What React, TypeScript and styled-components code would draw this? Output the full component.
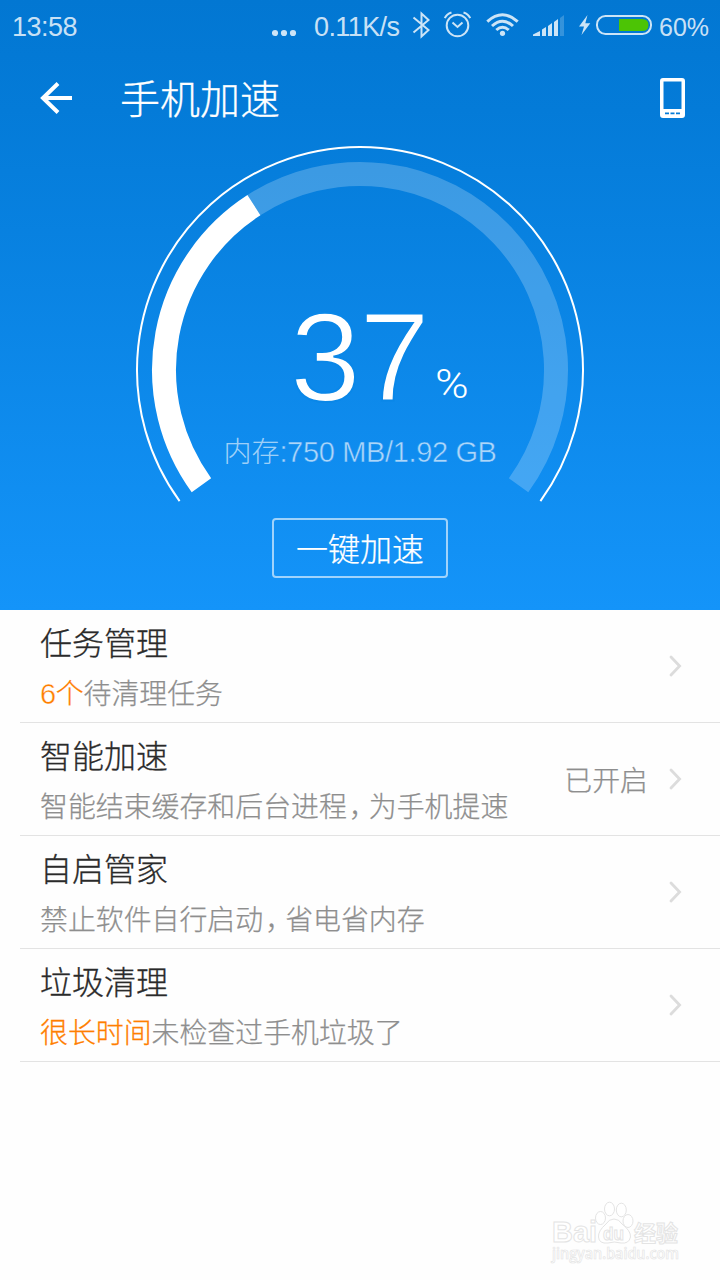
import React from 'react';
import styled, { createGlobalStyle } from 'styled-components';

const GlobalStyle = createGlobalStyle`
  * { box-sizing: border-box; }
  body {
    margin: 0;
    background: #fff;
    font-family: "Liberation Sans", "Noto Sans CJK SC", sans-serif;
  }
`;

const Screen = styled.div`
  width: 720px;
  height: 1280px;
  display: flex;
  flex-direction: column;
  background: #fefefe;
  overflow: hidden;
`;

const Hero = styled.section`
  height: 610px;
  display: flex;
  flex-direction: column;
  align-items: center;
  background: linear-gradient(180deg, #0277d2 0%, #047bd8 18%, #1494f9 100%);
  color: #fff;
`;

const StatusBar = styled.div`
  width: 100%;
  height: 50px;
  padding: 3px 12px 0;
  display: flex;
  align-items: center;
  color: rgba(255, 255, 255, 0.8);
  font-size: 27px;
  line-height: 50px;
  white-space: nowrap;
`;

const StatusText = styled.span<{ $width: number; $spacing?: number; $size?: number }>`
  flex: none;
  width: ${(p) => p.$width}px;
  letter-spacing: ${(p) => p.$spacing ?? 0}px;
  font-size: ${(p) => p.$size ?? 27}px;
`;

const StatusIcons = styled.svg`
  flex: none;
  display: block;
  margin-top: -3px;
`;

const Spacer = styled.div`
  flex: 1;
`;

const TitleBar = styled.header`
  width: 100%;
  height: 96px;
  padding: 0 34px 0 40px;
  display: flex;
  align-items: center;
`;

const Title = styled.h1`
  flex: 1;
  margin: -3px 0 0 47px;
  font-family: "Noto Sans CJK SC", sans-serif;
  font-weight: 300;
  font-size: 40px;
  line-height: 60px;
  -webkit-text-stroke: 0.3px currentColor;
`;

const Gauge = styled.div`
  display: grid;
  width: 450px;
  height: 372px;
  > * { grid-area: 1 / 1; }
`;

const Reading = styled.div`
  display: flex;
  flex-direction: column;
  align-items: center;
  padding-top: 140px;
`;

const Percent = styled.div`
  display: flex;
  align-items: baseline;
  height: 142px;
  line-height: 142px;
  margin-left: 37px;
`;

const Figure = styled.span`
  font-size: 127px;
  letter-spacing: -1.5px;
  -webkit-text-stroke: 2px #0a87e8;
`;

const Unit = styled.span`
  margin-left: 9px;
  font-family: Roboto, sans-serif;
  font-weight: 300;
  font-size: 40px;
  line-height: 40px;
  transform: translateY(-3px) scaleX(1.14);
`;

const Memory = styled.div`
  margin-top: 1px;
  font-family: "Noto Sans CJK SC", sans-serif;
  font-weight: 300;
  font-size: 28px;
  line-height: 42px;
  white-space: nowrap;
  color: rgba(255, 255, 255, 0.62);
`;

const MemoryValue = styled.span`
  font-family: "Liberation Sans", sans-serif;
  font-size: 29px;
  letter-spacing: -0.35px;
  color: rgba(255, 255, 255, 0.68);
  -webkit-text-stroke: 0.5px #0e8cf0;
`;

const BoostButton = styled.button`
  width: 176px;
  height: 60px;
  padding: 0 0 2px;
  border: 2px solid rgba(255, 255, 255, 0.6);
  border-radius: 4px;
  background: transparent;
  color: #fff;
  font-family: "Noto Sans CJK SC", sans-serif;
  font-weight: 300;
  font-size: 32px;
  line-height: 54px;
  -webkit-text-stroke: 0.25px currentColor;
`;

const List = styled.ul`
  list-style: none;
  margin: 0;
  padding: 0 0 0 20px;
`;

const Row = styled.li`
  height: 113px;
  padding: 0 38px 0 20px;
  border-bottom: 1px solid #e3e3e3;
  display: flex;
  align-items: center;
`;

const RowText = styled.div`
  flex: 1;
  height: 100%;
  padding-top: 7px;
  font-family: "Noto Sans CJK SC", sans-serif;
  font-weight: 300;
`;

const RowTitle = styled.div`
  font-size: 32px;
  line-height: 48px;
  color: #2a2a2a;
  -webkit-text-stroke: 0.3px currentColor;
`;

const RowNote = styled.div`
  margin-top: 6px;
  font-size: 27.9px;
  line-height: 42px;
  color: #8e8e8e;
  -webkit-text-stroke: 0.25px currentColor;
`;

const Accent = styled.span`
  color: #ff7e00;
  -webkit-text-stroke: 0.3px currentColor;
`;

const Numeral = styled.span`
  font-family: "Liberation Sans", sans-serif;
  font-size: 29px;
  letter-spacing: -0.5px;
  -webkit-text-stroke: 0.4px #fefefe;
`;

const Comma = styled.span`
  display: inline-block;
  width: 22px;
  padding-left: 2px;
  font-feature-settings: "halt";
`;

const RowState = styled.span`
  margin: 0 20px 0 0;
  font-family: "Noto Sans CJK SC", sans-serif;
  font-weight: 300;
  font-size: 27.9px;
  line-height: 42px;
  color: #8e8e8e;
  -webkit-text-stroke: 0.25px currentColor;
`;

const Footer = styled.footer`
  flex: 1;
  display: flex;
  justify-content: flex-end;
  align-items: flex-end;
  padding: 0 32px 0 0;
`;

const CX = 225;
const CY = 224;

function arc(radius: number, from: number, to: number) {
  const point = (deg: number) => {
    const a = (deg * Math.PI) / 180;
    return `${(CX - radius * Math.cos(a)).toFixed(2)} ${(CY - radius * Math.sin(a)).toFixed(2)}`;
  };
  return `M${point(from)} A${radius} ${radius} 0 ${to - from > 180 ? 1 : 0} 1 ${point(to)}`;
}

const SWEEP = 252;
const START = -36;
const VALUE = 37;

const Chevron = () => (
  <svg width="14" height="24" viewBox="0 0 14 24" fill="none" stroke="#dcdcdc" strokeWidth="2.8" strokeLinecap="round" strokeLinejoin="miter">
    <path d="M3 3 L11.6 12 L3 21" />
  </svg>
);

const rows: { title: string; note: React.ReactNode; state?: string }[] = [
  { title: '任务管理', note: <><Accent><Numeral>6</Numeral>个</Accent>待清理任务</> },
  { title: '智能加速', note: <>智能结束缓存和后台进程<Comma>，</Comma>为手机提速</>, state: '已开启' },
  { title: '自启管家', note: <>禁止软件自行启动<Comma>，</Comma>省电省内存</> },
  { title: '垃圾清理', note: <><Accent>很长时间</Accent>未检查过手机垃圾了</> },
];

export default function App() {
  return (
    <Screen>
      <GlobalStyle />
      <Hero>
        <StatusBar>
          <StatusText $width={70} $spacing={-0.5}>13:58</StatusText>
          <Spacer />
          <StatusIcons width="42" height="50" fill="currentColor">
            <circle cx="3" cy="33" r="3.1" />
            <circle cx="12" cy="33" r="3.1" />
            <circle cx="21" cy="33" r="3.1" />
          </StatusIcons>
          <StatusText $width={86} $spacing={-0.6}>0.11K/s</StatusText>
          <StatusIcons width="259" height="50" viewBox="400 0 259 50" fill="none" stroke="currentColor" strokeWidth="2">
            <path d="M413.5 17.5 L428.5 30 L421.5 36.5 V13.5 L428.5 20 L413.5 32.5" />
            <circle cx="457.5" cy="25.5" r="10.8" />
            <path d="M452.5 22.5 L457.5 27 L462.5 22.5" />
            <path d="M444.8 18.2 Q446.5 14 451.5 12.5 M470.2 18.2 Q468.5 14 463.5 12.5" />
            <g strokeWidth="3">
              <path d="M487.3 21.6 Q502.5 8 517.7 21.6" />
              <path d="M492 26 Q502.5 16.5 513 26" />
              <path d="M496.3 30 Q502.5 24.5 508.7 30" />
            </g>
            <circle cx="502.5" cy="33.3" r="2.6" fill="currentColor" stroke="none" />
            <g fill="currentColor" stroke="none">
              <path d="M533 36 V34.5 L540 31 V36 Z" />
              <path d="M542 36 V29.5 L546 27 V36 Z" />
              <path d="M548 36 V26 L552 23 V36 Z" />
              <path d="M554 36 V22 L558 19 V36 Z" />
              <path d="M560 36 V18 L564 15 V36 Z" opacity="0.25" />
              <path d="M587.5 15 L579 26.5 H584 L581.5 35 L590.3 23.3 H585.3 Z" />
            </g>
            <rect x="597" y="16" width="54" height="18" rx="8.5" />
            <path d="M619 19 H642 Q648.5 19 648.5 25 Q648.5 31 642 31 H619 Z" fill="#4cc405" stroke="none" />
          </StatusIcons>
          <StatusText $width={49} $size={25}>60%</StatusText>
        </StatusBar>

        <TitleBar>
          <svg width="33" height="36" viewBox="0 0 33 36" fill="none" stroke="#fff" strokeWidth="4">
            <path d="M18 3.5 L3 18 L18 32.5 M3 18 H32" />
          </svg>
          <Title>手机加速</Title>
          <svg width="26" height="40" viewBox="0 0 26 40">
            <path fill="#fff" fillRule="evenodd" d="M3 0 H22 Q25 0 25 3 V37 Q25 40 22 40 H3 Q0 40 0 37 V3 Q0 0 3 0 Z M3.5 3.5 V31 H21.5 V3.5 Z M5 34.5 V36.2 H9 V34.5 Z M10.5 34.5 V36.2 H14.5 V34.5 Z M16 34.5 V36.2 H20 V34.5 Z" />
          </svg>
        </TitleBar>

        <Gauge>
          <svg width="450" height="372" fill="none" stroke="#fff">
            <path d={arc(223, START, START + SWEEP)} strokeWidth="2" />
            <path d={arc(196, START + (SWEEP * VALUE) / 100, START + SWEEP)} strokeWidth="24" strokeOpacity="0.22" />
            <path d={arc(196, START, START + (SWEEP * VALUE) / 100)} strokeWidth="24" />
          </svg>
          <Reading>
            <Percent>
              <Figure>{VALUE}</Figure>
              <Unit>%</Unit>
            </Percent>
            <Memory>内存<MemoryValue>:750 MB/1.92 GB</MemoryValue></Memory>
          </Reading>
        </Gauge>
        <BoostButton>一键加速</BoostButton>
      </Hero>

      <List>
        {rows.map((row) => (
          <Row key={row.title}>
            <RowText>
              <RowTitle>{row.title}</RowTitle>
              <RowNote>{row.note}</RowNote>
            </RowText>
            {row.state && <RowState>{row.state}</RowState>}
            <Chevron />
          </Row>
        ))}
      </List>

      <Footer>
        <svg width="138" height="80" viewBox="550 1200 138 80" fill="#fff" stroke="#e4e4e4" strokeWidth="1" fontFamily='"Liberation Sans", "Noto Sans CJK SC", sans-serif' fontWeight="700">
          <text x="552" y="1242" fontSize="30" textLength="45" lengthAdjust="spacingAndGlyphs">Bai</text>
          <ellipse cx="600.5" cy="1218" rx="5" ry="6.5" />
          <ellipse cx="609.5" cy="1209" rx="5" ry="6.8" />
          <ellipse cx="621.3" cy="1210" rx="5" ry="6.8" />
          <ellipse cx="628" cy="1221" rx="5" ry="6.5" />
          <path d="M614 1219 Q619 1219 622 1224 Q631 1231 630.5 1237 Q629 1244 621 1243 Q614 1241 608 1243 Q599 1244 598.5 1237 Q598 1231 606 1224 Q609 1219 614 1219 Z" />
          <text x="603" y="1240" fontSize="19" textLength="21" lengthAdjust="spacingAndGlyphs">du</text>
          <text x="634" y="1241" fontSize="22">经验</text>
          <text x="552" y="1259" fontSize="16" strokeWidth="0.7" fontFamily='"Open Sans", sans-serif' fontWeight="600" textLength="127" lengthAdjust="spacingAndGlyphs">jingyan.baidu.com</text>
        </svg>
      </Footer>
    </Screen>
  );
}
